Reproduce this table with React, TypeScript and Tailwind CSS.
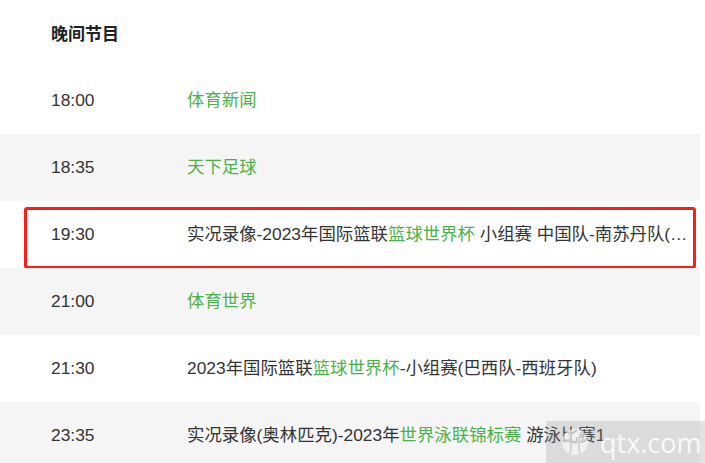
import React from "react";

type Seg = { t: string; g?: boolean };
type Row = { time: string; title: Seg[]; hl?: boolean };

const rows: Row[] = [
  { time: "18:00", title: [{ t: "体育新闻", g: true }] },
  { time: "18:35", title: [{ t: "天下足球", g: true }] },
  {
    time: "19:30",
    hl: true,
    title: [
      { t: "实况录像-2023年国际篮联" },
      { t: "篮球世界杯", g: true },
      { t: " 小组赛 中国队-南苏丹队(…" },
    ],
  },
  { time: "21:00", title: [{ t: "体育世界", g: true }] },
  {
    time: "21:30",
    title: [
      { t: "2023年国际篮联" },
      { t: "篮球世界杯", g: true },
      { t: "-小组赛(巴西队-西班牙队)" },
    ],
  },
  {
    time: "23:35",
    title: [
      { t: "实况录像(奥林匹克)-2023年" },
      { t: "世界泳联锦标赛", g: true },
      { t: " 游泳比赛1" },
    ],
  },
];

export default function App() {
  return (
    <div
      className="relative w-[705px] h-[463px] overflow-hidden bg-white text-[#333]"
      style={{ fontFamily: '"Liberation Sans", "Noto Sans CJK SC", sans-serif' }}
    >
      <div className="w-[700px]">
        <div className="h-[67px] flex items-center pl-[51px] pt-[3px] text-[17px] font-bold text-[#222]">
          晚间节目
        </div>
        {rows.map((r, i) => (
          <div
            key={i}
            className={`relative h-[67px] flex items-center text-[17.4px] ${
              i % 2 === 1 ? "bg-[#f5f5f5]" : "bg-white"
            }`}
          >
            <div className="w-[187px] pl-[51px] shrink-0">{r.time}</div>
            <div className="whitespace-nowrap">
              {r.title.map((s, j) => (
                <span key={j} className={s.g ? "text-[#4cb14a]" : ""}>
                  {s.t}
                </span>
              ))}
            </div>
            {r.hl && (
              <div className="absolute left-[24px] top-[6px] w-[672px] h-[62px] border-[3px] border-[#fb1d16] rounded-[3px] pointer-events-none" />
            )}
          </div>
        ))}
      </div>
      <div className="absolute left-[546px] top-[421px] w-[159px] h-[42px] bg-[rgba(150,150,150,0.28)] flex items-center pl-[14px] gap-[10px]">
        <svg width="30" height="30" viewBox="0 0 30 30">
          <circle cx="15" cy="15" r="13" fill="rgba(255,255,255,0.6)" />
          <path d="M4 13 Q15 18 26 13 M9 5 Q13 15 10 27 M21 5 Q17 15 20 27" stroke="rgba(200,200,200,0.7)" strokeWidth="2" fill="none" />
        </svg>
        <span className="text-[rgba(255,255,255,0.85)] text-[27px] leading-none" style={{ fontFamily: '"Open Sans", sans-serif' }}>
          qtx.com
        </span>
      </div>
    </div>
  );
}
